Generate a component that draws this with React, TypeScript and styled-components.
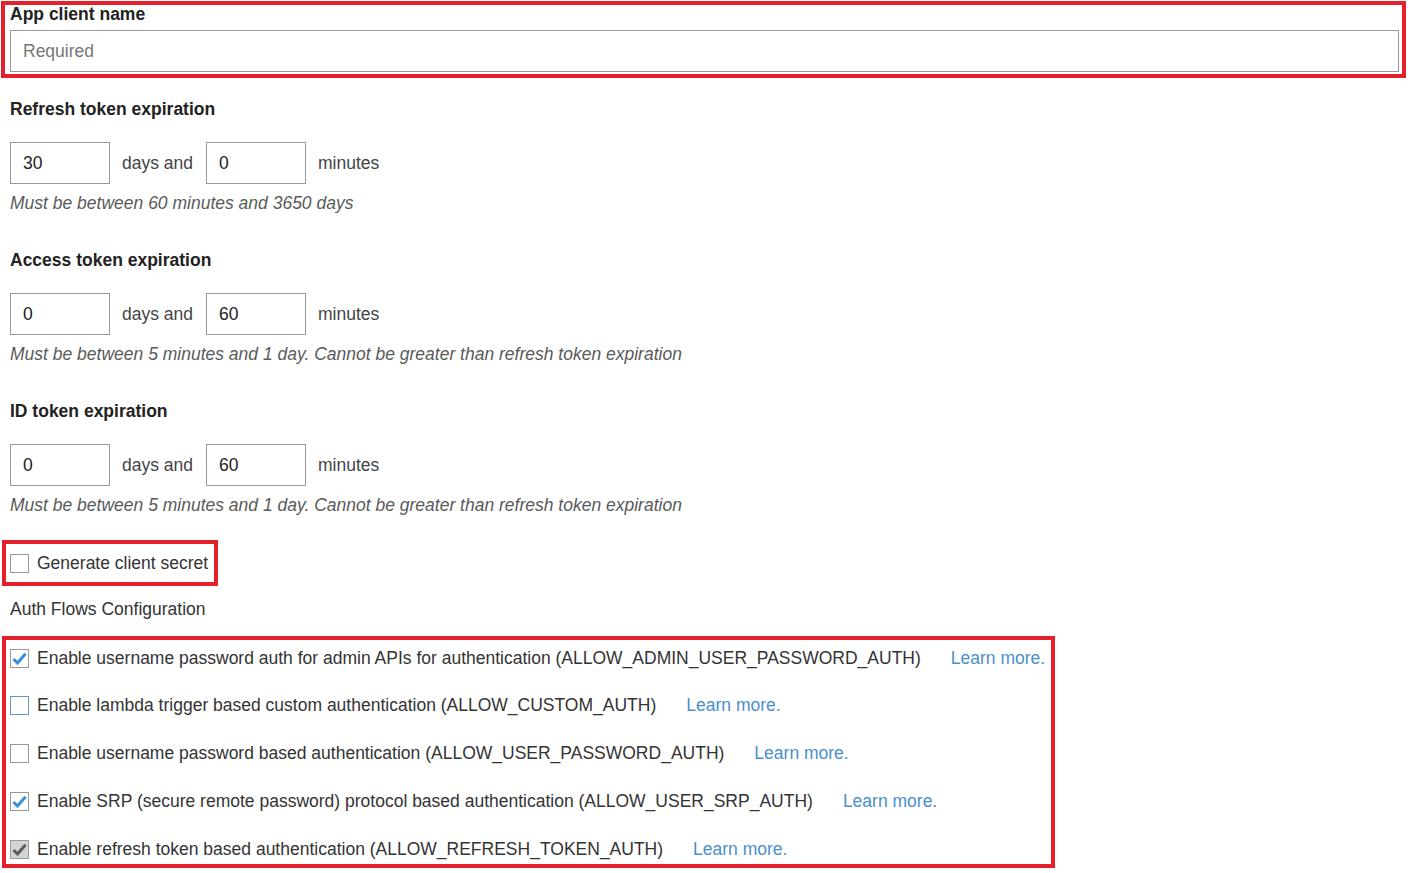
import React from "react";
import styled, { createGlobalStyle } from "styled-components";

const Global = createGlobalStyle`
  html, body { margin: 0; padding: 0; background: #fff; }
  body { font-family: "Liberation Sans", Arial, sans-serif; color: #333; font-size: 17.5px; }
  * { box-sizing: border-box; }
`;

const Page = styled.div`
  display: flex;
  flex-direction: column;
  align-items: flex-start;
  padding: 1px 2px 0 1px;
  width: 1408px;
`;

const Highlight = styled.div<{ $full?: boolean; $pad: string }>`
  border: 4px solid #e3202b;
  padding: ${(p) => p.$pad};
  display: ${(p) => (p.$full ? "flex" : "inline-flex")};
  flex-direction: column;
  align-self: ${(p) => (p.$full ? "stretch" : "flex-start")};
`;

const FieldLabel = styled.div<{ $lh?: number }>`
  font-weight: bold;
  font-size: 17.5px;
  line-height: ${(p) => p.$lh ?? 20}px;
  color: #222;
`;

const TextInput = styled.input<{ $w?: number }>`
  height: 42px;
  width: ${(p) => (p.$w ? `${p.$w}px` : "100%")};
  border: 1px solid #999;
  border-radius: 0;
  padding: 0 12px;
  font-family: "Liberation Sans", Arial, sans-serif;
  font-size: 17.5px;
  color: #222;
  outline: none;
  &::placeholder { color: #777; }
`;

const Section = styled.div<{ $top: number }>`
  display: flex;
  flex-direction: column;
  margin-top: ${(p) => p.$top}px;
  padding-left: 9px;
`;

const Row = styled.div`
  display: flex;
  align-items: center;
  margin-top: 23px;
`;

const Unit = styled.span`
  font-size: 17.5px;
  color: #444;
  margin: 0 13px 0 12px;
`;

const Hint = styled.div`
  font-style: italic;
  font-size: 17.5px;
  line-height: 20px;
  color: #5a5a5a;
  margin-top: 9px;
`;

const CheckRow = styled.label`
  display: flex;
  align-items: center;
  height: 24px;
  font-size: 17.5px;
  color: #333;
  white-space: nowrap;
`;

const Box = styled.span<{ $variant: "empty" | "hover" | "checked" | "disabled" }>`
  width: 19px;
  height: 19px;
  flex: none;
  margin-right: 8px;
  border: 1px solid
    ${(p) => (p.$variant === "hover" ? "#5b9bd1" : p.$variant === "disabled" ? "#9a9a9a" : "#999")};
  background: ${(p) => (p.$variant === "disabled" ? "#d4d4d4" : "#fff")};
  display: flex;
  align-items: center;
  justify-content: center;
`;

const Link = styled.a`
  color: #4a8fcc;
  text-decoration: none;
  margin-left: 30px;
  font-size: 17.5px;
`;

const Plain = styled.div`
  font-size: 17.5px;
  line-height: 20px;
  color: #333;
  margin: 13px 0 0 9px;
`;

const FlowList = styled.div`
  display: flex;
  flex-direction: column;
  gap: 23.75px;
`;

const Check = ({ color }: { color: string }) => (
  <svg width="15" height="13" viewBox="0 0 15 13">
    <path d="M1.5 7 L5.5 11 L13.5 1.8" fill="none" stroke={color} strokeWidth="3" strokeLinejoin="miter" />
  </svg>
);

type V = "empty" | "hover" | "checked" | "disabled";
const CheckBox = ({ v }: { v: V }) => (
  <Box $variant={v}>
    {v === "checked" && <Check color="#3a8fd9" />}
    {v === "disabled" && <Check color="#5c5c5c" />}
  </Box>
);

const TokenSection = ({ title, days, mins, hint, top }: { title: string; days: string; mins: string; hint: string; top: number }) => (
  <Section $top={top}>
    <FieldLabel>{title}</FieldLabel>
    <Row>
      <TextInput $w={100} defaultValue={days} />
      <Unit>days and</Unit>
      <TextInput $w={100} defaultValue={mins} />
      <Unit>minutes</Unit>
    </Row>
    <Hint>{hint}</Hint>
  </Section>
);

const flows: { text: string; v: V }[] = [
  { text: "Enable username password auth for admin APIs for authentication (ALLOW_ADMIN_USER_PASSWORD_AUTH)", v: "checked" },
  { text: "Enable lambda trigger based custom authentication (ALLOW_CUSTOM_AUTH)", v: "hover" },
  { text: "Enable username password based authentication (ALLOW_USER_PASSWORD_AUTH)", v: "empty" },
  { text: "Enable SRP (secure remote password) protocol based authentication (ALLOW_USER_SRP_AUTH)", v: "checked" },
  { text: "Enable refresh token based authentication (ALLOW_REFRESH_TOKEN_AUTH)", v: "disabled" },
];

export default function App() {
  return (
    <>
      <Global />
      <Page>
        <Highlight $full $pad="0 3px 2px 5px">
          <FieldLabel $lh={18}>App client name</FieldLabel>
          <TextInput placeholder="Required" style={{ marginTop: 7 }} />
        </Highlight>
        <TokenSection top={21} title="Refresh token expiration" days="30" mins="0" hint="Must be between 60 minutes and 3650 days" />
        <TokenSection top={37} title="Access token expiration" days="0" mins="60" hint="Must be between 5 minutes and 1 day. Cannot be greater than refresh token expiration" />
        <TokenSection top={37} title="ID token expiration" days="0" mins="60" hint="Must be between 5 minutes and 1 day. Cannot be greater than refresh token expiration" />
        <Highlight $pad="7px 6px 7px 4px" style={{ marginTop: 25, marginLeft: 1 }}>
          <CheckRow>
            <CheckBox v="empty" />
            Generate client secret
          </CheckRow>
        </Highlight>
        <Plain>Auth Flows Configuration</Plain>
        <Highlight $pad="6px 6px 3px 4px" style={{ marginTop: 17, marginLeft: 1 }}>
          <FlowList>
            {flows.map((f) => (
              <CheckRow key={f.text}>
                <CheckBox v={f.v} />
                {f.text}
                <Link href="#">Learn more.</Link>
              </CheckRow>
            ))}
          </FlowList>
        </Highlight>
      </Page>
    </>
  );
}
